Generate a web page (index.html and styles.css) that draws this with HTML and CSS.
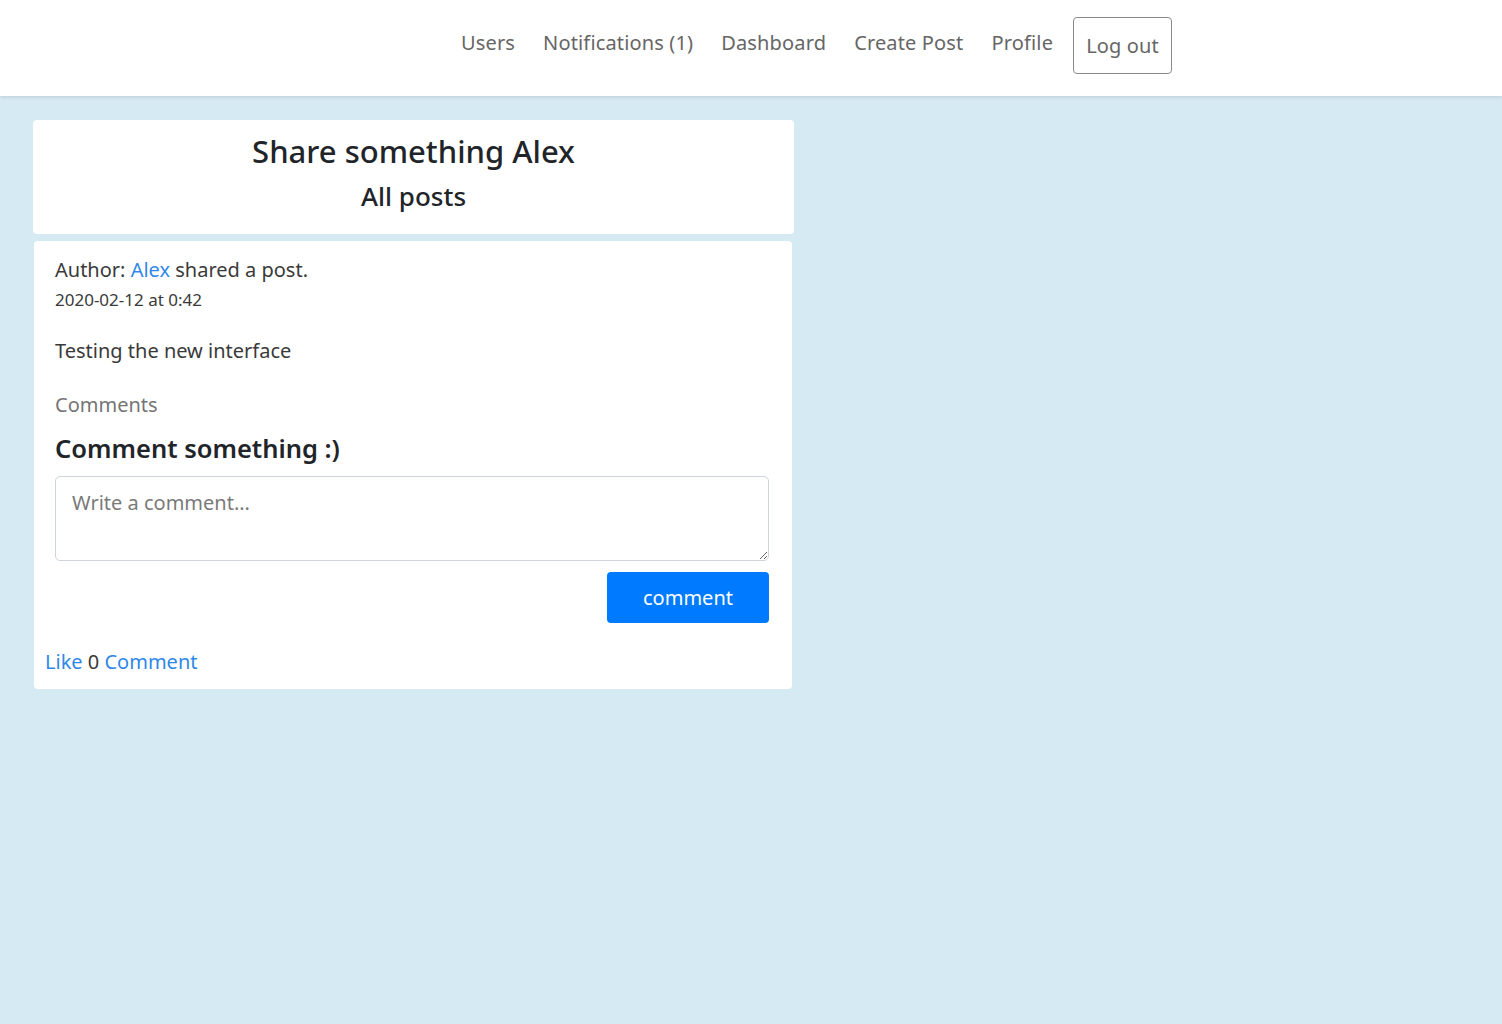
FILE: index.html
```html
<!DOCTYPE html>
<html lang="en">
<head>
<meta charset="utf-8">
<title>Posts</title>
<link rel="stylesheet" href="styles.css">
</head>
<body>
<header class="navbar">
  <nav class="nav">
    <a class="nav-link" href="#">Users</a>
    <a class="nav-link" href="#">Notifications (1)</a>
    <a class="nav-link" href="#">Dashboard</a>
    <a class="nav-link" href="#">Create Post</a>
    <a class="nav-link" href="#">Profile</a>
    <button class="btn-logout" type="button">Log out</button>
  </nav>
</header>
<main class="main">
  <section class="card card-head">
    <h1 class="title">Share something Alex</h1>
    <h2 class="subtitle">All posts</h2>
  </section>
  <article class="card card-post">
    <div class="post-body">
      <p class="author">Author: <a href="#" class="link">Alex</a> shared a post.</p>
      <p class="date">2020-02-12 at 0:42</p>
      <p class="content">Testing the new interface</p>
      <p class="comments-label">Comments</p>
      <h3 class="comment-title">Comment something :)</h3>
      <textarea class="comment-input" placeholder="Write a comment..."></textarea>
      <div class="actions">
        <button class="btn-primary" type="button">comment</button>
      </div>
    </div>
    <div class="post-footer">
      <a href="#" class="link">Like</a> <span class="count">0</span> <a href="#" class="link">Comment</a>
    </div>
  </article>
</main>
</body>
</html>
```
FILE: styles.css
```css
* { box-sizing: border-box; }
html, body { margin: 0; padding: 0; }
body {
  background: #d6eaf3;
  font-family: "Noto Sans", "Open Sans", sans-serif;
  color: #212529;
  min-height: 1024px;
}
.navbar {
  background: #fff;
  height: 96px;
  box-shadow: 0 1px 4px rgba(0,0,0,0.12);
  display: flex;
  align-items: center;
}
.nav {
  display: flex;
  align-items: center;
  margin-left: 447px;
  margin-top: -8px;
}
.nav-link {
  color: #666;
  text-decoration: none;
  font-size: 20px;
  letter-spacing: 0.15px;
  padding: 0 14px;
  margin-top: -4px;
}
.btn-logout {
  margin-left: 6px;
  font-family: inherit;
  font-size: 20px;
  letter-spacing: 0.15px;
  color: #666;
  background: #fff;
  border: 1px solid #8a8a8a;
  border-radius: 4px;
  width: 99px;
  height: 57px;
  margin-top: 2px;
}
.main {
  padding: 24px 0 0 33px;
  width: 794px;
  display: flex;
  flex-direction: column;
  gap: 7px;
}
.card {
  background: #fff;
  border-radius: 4px;
}
.card-head {
  height: 114px;
  text-align: center;
  padding-top: 10px;
}
.title {
  margin: 0;
  font-size: 31px;
  font-weight: 500;
  line-height: 42px;
}
.subtitle {
  margin: 6px 0 0;
  font-size: 26px;
  font-weight: 500;
  line-height: 36px;
}
.card-post {
  margin-left: 1px;
  width: 758px;
  height: 448px;
  padding: 15px 22px 0 11px;
}
.post-body { padding-left: 10px; }
.author { margin: 0; font-size: 20px; line-height: 28px; color: #3a3a3a; }
.date { margin: 4px 0 0; font-size: 17px; line-height: 23px; color: #3a3a3a; }
.content { margin: 26px 0 0; font-size: 20px; line-height: 28px; color: #3a3a3a; }
.comments-label { margin: 26px 0 0; font-size: 20px; line-height: 28px; color: #757575; }
.comment-title { margin: 12px 0 0; font-size: 25.5px; font-weight: 600; line-height: 34px; color: #212529; }
.link { color: #2f88e8; text-decoration: none; }
.comment-input {
  display: block;
  margin-top: 11px;
  width: 714px;
  height: 85px;
  border: 1px solid #ced4da;
  border-radius: 5px;
  padding: 12px 16px;
  font-family: inherit;
  font-size: 20px;
  color: #495057;
  resize: vertical;
}
.comment-input::placeholder { color: #7a7a7a; }
.actions {
  display: flex;
  justify-content: flex-end;
  width: 714px;
  margin-top: 11px;
}
.btn-primary {
  width: 162px;
  height: 51px;
  background: #007bff;
  color: #fff;
  border: 0;
  border-radius: 4px;
  font-family: inherit;
  font-size: 20px;
}
.post-footer {
  margin-top: 25px;
  font-size: 20px;
  line-height: 28px;
  color: #3a3a3a;
}
```
